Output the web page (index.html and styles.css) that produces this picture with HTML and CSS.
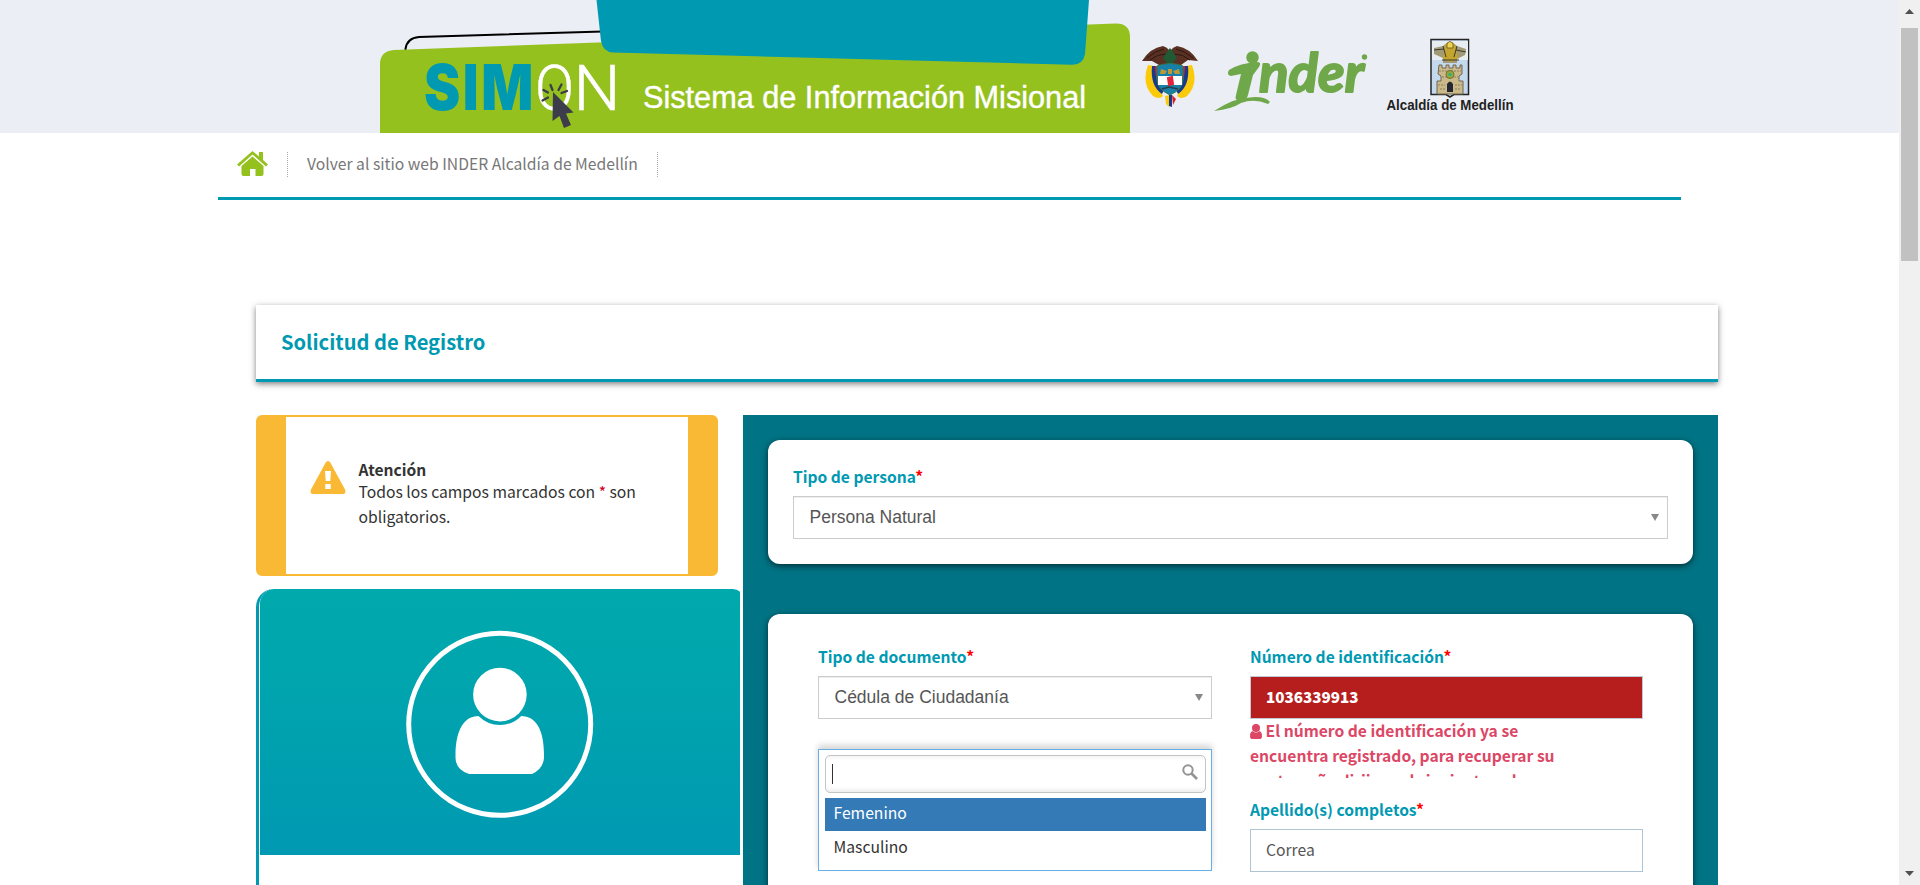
FILE: index.html
```html
<!DOCTYPE html>
<html lang="es">
<head>
<meta charset="utf-8">
<title>SIMON - Solicitud de Registro</title>
<link rel="stylesheet" href="styles.css">
</head>
<body>
<div class="window">
<div class="page">
  <header class="header">
    <svg class="banner" viewBox="380 0 750 133" width="750" height="133">
      <path d="M405.500 55 V49 Q407 38 419 37 L603 31.500" fill="none" stroke="#000" stroke-width="2"/>
      <path d="M380 133 V64 Q380 51 394 50 L1116 23.500 Q1130 23.500 1130 37 V133 Z" fill="#95c11f"/>
      <path d="M596.500 0 H1089 L1085 54 Q1083 65 1072 64.700 L613 52.500 Q603 52 601 41 Z" fill="#0099b2"/>
      <text class="simon-bold" x="424" y="110" textLength="112" lengthAdjust="spacingAndGlyphs">SIM</text>
      <text class="simon-thin" x="535" y="110" textLength="39" lengthAdjust="spacingAndGlyphs">O</text>
      <text class="simon-thin" x="573.500" y="110" textLength="47" lengthAdjust="spacingAndGlyphs">N</text>
      <g fill="none" stroke="#3c3c4b" stroke-width="2.300" stroke-linecap="round">
        <path d="M550.500 85 L552.500 90 M561.500 84.500 L558.500 90 M543.500 90 L548 92.500 M567 91 L561.500 93 M542.500 100.500 L548 97.500"/>
      </g>
      <path d="M553 92 L573.500 112.500 L566 113.500 L571 125 L564 128 L559.500 116 L552.500 121 Z" fill="#3c3c4b"/>
      <text class="banner-text" x="643" y="107.500" textLength="443" lengthAdjust="spacingAndGlyphs">Sistema de Información Misional</text>
    </svg>
    <div class="logos">
      <svg class="arms" viewBox="0 0 56 62" width="56" height="62">
        <path d="M6 19 Q-1 38 11 50 Q17 54 21 50 L18 45 Q11 40 12 20 Z M50 19 Q57 38 45 50 Q39 54 35 50 L38 45 Q45 40 44 20 Z" fill="#fbca0b"/>
        <path d="M10 20 Q8 40 20 48 L22 44 Q13 36 14 20 Z M46 20 Q48 40 36 48 L34 44 Q43 36 42 20 Z" fill="#173a8c"/>
        <path d="M13 20 Q13 38 22 44 L23 40 Q16 35 16 20 Z M43 20 Q43 38 34 44 L33 40 Q40 35 40 20 Z" fill="#d8202f"/>
        <path d="M0 15 Q8 2 21 0 Q25 1 28 5 Q31 1 35 0 Q48 2 56 15 L46 14 L39 19 H17 L10 15 Z" fill="#5a3023"/>
        <path d="M5 12 Q13 5 22 3 M8 14 Q15 8 24 8 M51 12 Q43 5 34 3 M48 14 Q41 8 32 8" stroke="#2b1714" fill="none"/>
        <path d="M25 6 L28 2 L31 6 L35 12 L30 18 H26 L21 12 Z" fill="#1f5a35"/>
        <path d="M15 20 Q28 15 41 20 V34 Q41 43 28 49 Q15 43 15 34 Z" fill="#1680a8" stroke="#37764d"/>
        <path d="M16 30 H40 V39 H16 Z" fill="#fff"/>
        <path d="M26 32 L30 31 L31 38 L27 39 Z" fill="#e12639" stroke="#e12639" stroke-width="2"/>
        <path d="M19 23 L25 25 L23 28 L18 28 Z M37 23 L31 25 L33 28 L38 28 Z M26 23 H30 V28 H26 Z" fill="#b99a3a"/>
        <path d="M20 43 L27 41 L36 43" stroke="#263d4a" fill="none" stroke-width="1.500"/>
        <path d="M23 50 L28 49 L27 61 L24 58 Z" fill="#fbca0b"/><path d="M27 49 H30 L30 61 L27 60 Z" fill="#173a8c"/><path d="M30 49 L34 53 L31 59 Z" fill="#d8202f"/>
      </svg>
      <svg class="inder" viewBox="1213 50 156 63" width="156" height="63">
        <circle cx="1252.500" cy="57.500" r="6.200" fill="#6fa84a"/>
        <path d="M1229 70 Q1226 75 1231 76 L1241 74 L1236 95 Q1234 101 1241 101 Q1247 100 1248 95 L1253 75 L1259 67 Q1262 62 1257 62 Q1240 63 1229 70 Z" fill="#6fa84a"/>
        <path d="M1214 111 Q1235 97 1255 97 Q1266 97 1270 102 L1268 104 Q1254 98 1241 103 Q1232 109 1214 111 Z" fill="#6fa84a"/>
        <text class="inder-text" x="1259" y="91.500" textLength="105" lengthAdjust="spacingAndGlyphs">nder</text>
        <circle cx="1364.500" cy="57" r="2.700" fill="#6fa84a"/>
      </svg>
      <svg class="alcaldia" viewBox="1386 38 129 78" width="129" height="78">
        <path d="M1431 39.500 H1468.500 V94.500 H1454 L1450 97 L1446 94.500 H1431 Z" fill="#c4d8ee" stroke="#252525" stroke-width="1.500"/>
        <path d="M1432 41 H1468 V60 H1432 Z" fill="#e8edf2"/>
        <path d="M1434 48 L1443 46 L1448 42 H1452 L1457 46 L1466 49 L1465 55 L1457 59 V63 H1443 V58 L1434 54 Z" fill="#a39b78"/>
        <path d="M1445 45 Q1450 38 1455 45 L1458 58 Q1450 65 1443 58 Z" fill="#c4a52e"/>
        <path d="M1447 44 Q1450 39 1453 44 V48 H1447 Z" fill="#efd454" stroke="#544821" stroke-width=".7"/>
        <path d="M1434 50 L1444 49 M1456 50 L1466 52 M1442 60 H1459 M1443 46 L1446 57 M1457 46 L1454 57" stroke="#3c3930" fill="none"/>
        <path d="M1439 65 H1442 V68 H1446 V65 H1449 V68 H1453 V65 H1456 V68 H1460 V65 H1462 V74 L1459 76 V81 H1463 V94 H1437 V81 H1441 V76 L1438 74 Z" fill="#cbb98a" stroke="#70674f"/>
        <path d="M1439 71 H1461 M1442 77 H1458 M1438 85 H1445 M1455 85 H1462 M1440 89 H1445 M1455 89 H1461" stroke="#8f815e" stroke-dasharray="2 1"/>
        <circle cx="1450" cy="74.500" r="4" fill="#9ba739" stroke="#6b7235"/><circle cx="1450" cy="74.500" r="1.800" fill="#35ae7b"/>
        <path d="M1447 92 V84 Q1450 79 1453 84 V92 Z" fill="#252833"/>
        <text class="alcaldia-text" x="1386.500" y="110" textLength="127" lengthAdjust="spacingAndGlyphs">Alcaldía de Medellín</text>
      </svg>
    </div>
  </header>

  <nav class="nav">
    <a class="home"><svg viewBox="0 0 31 25" width="31" height="25"><path d="M15.500 0 L22 5.500 V1 H26 V9 L31 13.500 L29 15.500 L15.500 3.500 L2 15.500 L0 13.500 Z" fill="#95c11f"/><path d="M15.500 5.500 L26.500 15 V23 Q26.500 25 24.500 25 H18.500 V18 H13 V25 H6.500 Q4.500 25 4.500 23 V15 Z" fill="#95c11f"/></svg></a>
    <a class="nav-link">Volver al sitio web INDER Alcaldía de Medellín</a>
  </nav>

  <main class="content">
    <h1 class="title">Solicitud de Registro</h1>
    <div class="columns">
      <aside class="side">
        <div class="alert">
          <svg class="warn" viewBox="0 0 36 33" width="36" height="33"><path d="M15.700 1.500 Q18 -1.500 20.300 1.500 L35 28.500 Q36.500 33 33 33 H3 Q-.5 33 1 28.500 Z" fill="#f9b934"/><path d="M15 10 H21 L20.300 20 H15.700 Z M15.300 23 H20.700 V28 H15.300 Z" fill="#fff"/></svg>
          <div class="alert-body"><b class="alert-title">Atención</b><p class="alert-text">Todos los campos marcados con <span class="mark">*</span> son obligatorios.</p></div>
        </div>
        <div class="profile">
          <div class="profile-image">
            <svg viewBox="0 0 188 188" width="188" height="188">
              <circle cx="93.700" cy="94.300" r="91" fill="none" stroke="#fff" stroke-width="5"/>
              <circle cx="93.900" cy="64.600" r="26.800" fill="#fff"/>
              <path d="M72.500 86 Q81.500 95 94 95 Q106.500 95 115.200 86 C130 86 138 100 138 124 V128 Q137 139 126 144 H63 Q50 140 49.500 128 V124 C50 100 58 86 72.500 86 Z" fill="#fff"/>
            </svg>
          </div>
        </div>
      </aside>
      <section class="form">
        <div class="card">
          <label class="label">Tipo de persona<span class="req">*</span></label>
          <div class="select">Persona Natural<svg class="caret" viewBox="0 0 8 7" width="8" height="7"><path d="M0 0 H8 L4 7 Z" fill="#888"/></svg></div>
        </div>
        <div class="card card-grid">
          <div class="group">
            <label class="label">Tipo de documento<span class="req">*</span></label>
            <div class="select">Cédula de Ciudadanía<svg class="caret" viewBox="0 0 8 7" width="8" height="7"><path d="M0 0 H8 L4 7 Z" fill="#888"/></svg></div>
            <div class="dropdown">
              <div class="search"><span class="cursor"></span><svg viewBox="0 0 16 16" width="16" height="16"><circle cx="6" cy="6" r="4.700" fill="none" stroke="#949494" stroke-width="2"/><path d="M9.500 9.500 L15 15" stroke="#949494" stroke-width="2.600"/></svg></div>
              <div class="option active">Femenino</div>
              <div class="option">Masculino</div>
            </div>
          </div>
          <div class="group">
            <label class="label">Número de identificación<span class="req">*</span></label>
            <div class="input invalid">1036339913</div>
            <div class="error"><svg viewBox="0 0 12 15" width="12" height="15"><circle cx="6" cy="4" r="4" fill="#dc4766"/><path d="M2.500 7 Q6 10 9.500 7 Q12 8 12 12 Q12 15 10 15 H2 Q0 15 0 12 Q0 8 2.500 7 Z" fill="#dc4766"/></svg> El número de identificación ya se<br>encuentra registrado, para recuperar su<br>contraseña dirijase al siguiente enlace</div>
            <label class="label">Apellido(s) completos<span class="req">*</span></label>
            <div class="input">Correa</div>
          </div>
        </div>
      </section>
    </div>
  </main>
</div>
<div class="scrollbar">
  <svg viewBox="0 0 9 5" width="9" height="5"><path d="M4.500 0 L9 5 H0 Z" fill="#505050"/></svg>
  <div class="thumb"></div>
  <svg class="down" viewBox="0 0 9 5" width="9" height="5"><path d="M0 0 H9 L4.500 5 Z" fill="#505050"/></svg>
</div>
</div>
</body>
</html>
```
FILE: styles.css
```css
* { box-sizing: border-box; }
body { margin: 0; background: #fff; overflow: hidden; font-family: "Noto Sans CJK SC", "Open Sans", sans-serif; font-size: 15.7px; line-height: 25px; color: #333; }
.window { display: flex; height: 885px; overflow: hidden; }
.page { width: 1899px; height: 885px; overflow: hidden; }

.header { height: 133px; background: #ebeef4; padding-left: 380px; display: flex; }
.banner { display: block; flex: none; }
.simon-bold { font: 900 63px Inter, sans-serif; letter-spacing: 3px; fill: #0099b2; }
.simon-thin { font: 300 63px Roboto, sans-serif; fill: #fff; stroke: #fff; stroke-width: .5px; }
.banner-text { font: 31px "Liberation Sans", sans-serif; fill: #fff; stroke: #fff; stroke-width: .4px; }
.logos { display: flex; align-items: flex-start; }
.arms { margin: 46px 0 0 12px; }
.inder { margin: 50px 0 0 15px; overflow: visible; }
.inder-text { font: italic 700 53px Lato, sans-serif; fill: #6fa84a; stroke: #6fa84a; stroke-width: 2px; stroke-linejoin: round; }
.alcaldia { margin: 38px 0 0 17px; overflow: visible; }
.alcaldia-text { font: 700 14.5px "Liberation Sans", sans-serif; fill: #222; }

.nav { width: 1463px; height: 67px; margin-left: 218px; padding: 19px 0 0 19px; border-bottom: 3px solid #0099b2; display: flex; align-items: flex-start; }
.home { height: 25px; width: 51px; border-right: 1px dotted #aaa; display: block; }
.home svg { display: block; margin-top: -1px; }
.nav-link { height: 25px; width: 370px; padding-left: 19px; border-right: 1px dotted #aaa; color: #777; line-height: 24px; white-space: nowrap; }

.content { width: 1462px; margin: 105px 0 0 256px; }
.title { margin: 0; height: 77px; padding-left: 25px; border-bottom: 3px solid #0099b2; box-shadow: 0 2px 6px rgba(0,0,0,.5); color: #0099b2; font-size: 20.1px; font-weight: 700; line-height: 74px; }
.columns { display: flex; margin-top: 33px; }
.side { width: 487px; flex: none; }
.alert { width: 462px; height: 161px; border: 2px solid #f9b934; border-width: 2px 30px; border-radius: 6px; display: flex; padding: 42px 20px 0 24px; gap: 12.5px; }
.warn { flex: none; margin-top: 2px; }
.alert-title { display: block; line-height: 20px; color: #333; font-size: 15.6px; }
.alert-text { margin: 0; width: 285px; }
.mark { color: #d0021b; }
.profile { margin-top: 13px; width: 484px; height: 400px; border-left: 3px solid #0099b2; border-radius: 18px 0 0 0; overflow: hidden; padding-left: 1px; }
.profile-image { width: 483px; height: 266px; border-radius: 14px 10px 0 0; background: linear-gradient(#00a9ac, #00a5ae 35%, #0099b2); padding: 41px 0 0 146px; }
.form { flex: 1; height: 600px; background: #007384; padding: 25px; }
.card { height: 124px; background: #fff; border-radius: 12px; box-shadow: 0 2px 6px rgba(0,0,0,.6); padding: 25px; }
.card-grid { height: 500px; margin-top: 50px; padding: 30px 50px; display: grid; grid-template-columns: 394px 393px; column-gap: 38px; }
.label { display: block; height: 31px; line-height: 23px; color: #0099b2; font-weight: 700; font-size: 15.6px; }
.card-grid .label { height: 32px; line-height: 24px; }
.req { color: #f00; }
.select { height: 43px; border: 1px solid #ccc; box-shadow: inset 0 1px 1px rgba(0,0,0,.075); padding: 0 8px 0 15.5px; display: flex; align-items: center; justify-content: space-between; font: 17.5px/41px "Liberation Sans", sans-serif; color: #555; }
.group { position: relative; }
.input { height: 43px; border: 1px solid #b0c5d4; padding-left: 15px; line-height: 39px; color: #555; }
.invalid { background: #b61e1e; border-color: #c2cad6; color: #fff; font-weight: 900; line-height: 39px; font-size: 15.2px; }
.error { height: 60px; margin: -1px 0 19px; overflow: hidden; color: #dc4766; font-weight: 700; font-size: 15.65px; white-space: nowrap; }
.error svg { vertical-align: -2px; }
.dropdown { position: absolute; left: 0; top: 105px; width: 394px; height: 122px; background: #fff; border: 1px solid #66afe9; padding: 5px 5px 0 6px; box-shadow: 0 -4px 6px rgba(0,0,0,.16); color: #333; }
.search { height: 38px; border: 1px solid #c4c4c4; border-radius: 5px; margin-bottom: 5px; background: linear-gradient(#f5f5f5, #fff 5px, #fff 85%, #eee); display: flex; justify-content: space-between; padding: 8px 7px 0 6px; }
.cursor { width: 1px; height: 20px; background: #333; }
.option { height: 33px; padding-left: 8.5px; line-height: 29px; margin-bottom: 1px; }
.active { background: #337ab7; color: #fff; }

.scrollbar { width: 21px; background: #f0f0f0; display: flex; flex-direction: column; align-items: center; padding-top: 9px; }
.scrollbar svg { flex: none; }
.thumb { width: 17px; height: 233px; background: #c1c1c1; margin-top: 14px; }
.down { margin-top: 610px; }
```
